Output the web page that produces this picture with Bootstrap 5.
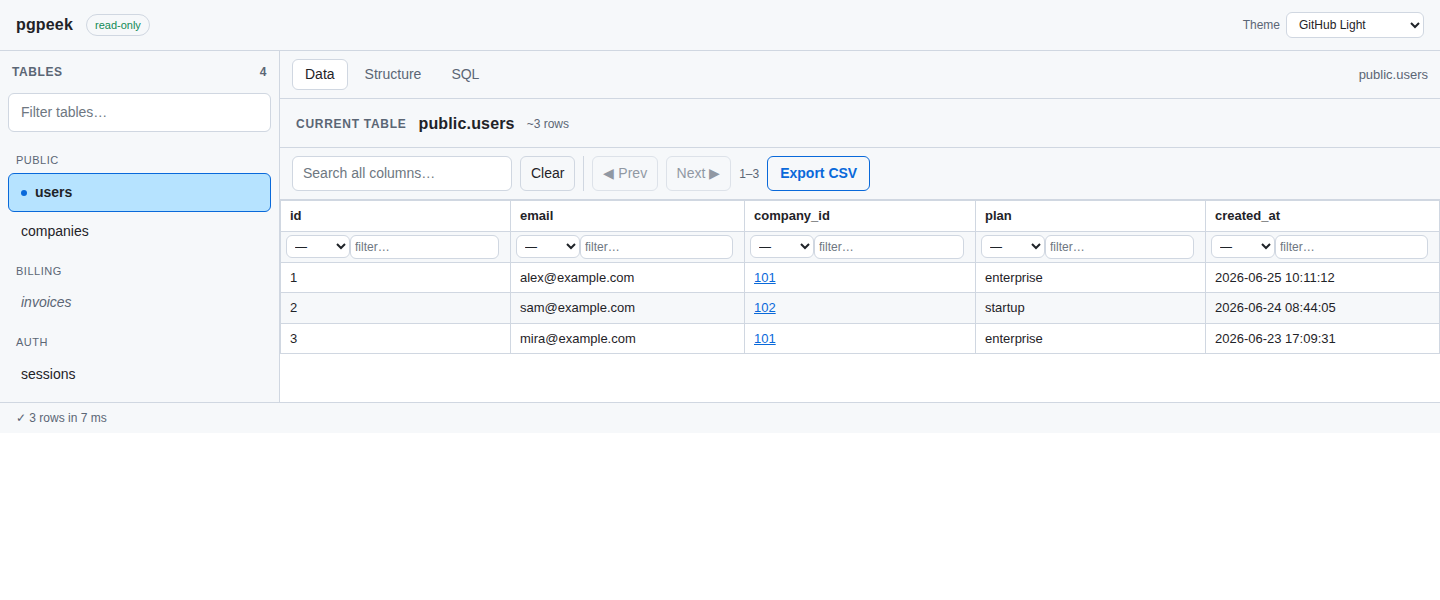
<!doctype html>
<html lang="en"><head><meta charset="utf-8"><title>pgpeek</title>
<link href="https://cdn.jsdelivr.net/npm/bootstrap@5.3.0/dist/css/bootstrap.min.css" rel="stylesheet">
<style>
:root{--line:#d0d7e1;--soft:#f6f8fa;--ink:#1f2328;--mute:#5b6675;--blue:#0969da;}
body{font-family:"Liberation Sans",Arial,sans-serif;color:var(--ink);background:#fff;font-size:14px;}
.app-head{height:51px;background:var(--soft);border-bottom:1px solid var(--line);padding:0 16px;}
.brand{font-size:16px;font-weight:700;letter-spacing:.01em;}
.ro-pill{font-size:11px;color:#128a55;border:1px solid var(--line);border-radius:999px;padding:3px 8px;line-height:14px;margin-left:13px;}
.theme-lbl{font-size:12px;color:var(--mute);margin-right:6px;}
.theme-sel{width:138px;height:26px;font-size:12px;padding:0 4px 0 8px;border-color:var(--line);border-radius:6px;color:var(--ink);appearance:auto;-webkit-appearance:auto;background-image:none;background-color:#fff;}
.shell{height:351px;}
.side{width:280px;flex:none;background:var(--soft);border-right:1px solid var(--line);padding:0 8px;}
.side-top{height:42px;padding:0 4px;font-size:12px;font-weight:700;letter-spacing:.6px;color:var(--mute);}
.side-filter{height:39px;font-size:14px;border-color:var(--line);border-radius:6px;padding:0 12px 2px;margin-bottom:22px;}
.side-filter::placeholder,.tool-search::placeholder,.col-filter::placeholder{color:#6e7781;opacity:1;}
.grp{font-size:11px;letter-spacing:.5px;color:var(--mute);padding-left:8px;line-height:13px;margin:14px 0 5px;}
.tbl-item{height:39px;padding:0 12px;border:1px solid transparent;border-radius:6px;font-size:14px;color:var(--ink);}
.tbl-item.on{background:#b6e3ff;border-color:var(--blue);font-weight:700;margin-top:6px;}
.tbl-item.view{font-style:italic;color:var(--mute);}
.tbl-item.tail{margin-top:6px;}
.dot{width:6px;height:6px;border-radius:50%;background:var(--blue);margin-right:8px;}
.main-pane{min-width:0;}
.tabbar{height:48px;background:var(--soft);border-bottom:1px solid var(--line);padding:0 12px;gap:4px;}
.tabbtn{height:31px;padding:0 12px;border:1px solid transparent;border-radius:6px;font-size:14px;color:var(--mute);background:transparent;}
.tabbtn.on{background:#fff;border-color:var(--line);color:var(--ink);}
.tab-path{font-size:13px;color:var(--mute);}
.curbar{height:49px;background:var(--soft);border-bottom:1px solid var(--line);padding:1px 16px 0;}
.cur-lbl{font-size:12px;font-weight:700;letter-spacing:.06em;color:var(--mute);}
.cur-name{font-size:16px;font-weight:700;margin-left:12px;letter-spacing:.01em;}
.cur-rows{font-size:12px;color:var(--mute);margin-left:12px;}
.toolbar{height:52px;background:var(--soft);border-bottom:1px solid var(--line);padding:0 12px;}
.tool-search{width:220px;height:35px;font-size:14px;border-color:var(--line);border-radius:6px;padding:0 10px 2px;}
.tbtn{height:35px;padding:0 10px;font-size:14px;border:1px solid var(--line);border-radius:6px;background:var(--soft);color:var(--ink);margin-left:8px;}
.tbtn:disabled{color:var(--mute);opacity:.65;border-color:var(--line);background:var(--soft);padding:0 9.4px 0 10px;}
.tsep{width:1px;height:35px;background:var(--line);margin:0 8px;}
.trange{font-size:12px;color:var(--mute);margin-left:8.5px;}
.tbtn.export{color:var(--blue);border-color:var(--blue);font-weight:700;padding:0 12px 0 12.5px;margin-left:7.5px;}
.data-t{table-layout:fixed;width:1159px;margin:0;font-size:13px;border-color:var(--line);color:var(--ink);}
.data-t th,.data-t td{padding:0 9px;border:1px solid var(--line);vertical-align:middle;color:var(--ink);background:transparent;box-shadow:none;}
.data-t .hrow th{height:31px;font-weight:700;background:#fff;}
.data-t .frow td{height:31px;padding:0 11px 0 5px;background:var(--soft);}
.data-t .r td{height:30px;}
.data-t .alt td{background:var(--soft);height:31px;}
.w1{width:230px}.w2{width:234px}.w3{width:231px}.w4{width:230px}.w5{width:234px}
.op-sel{width:64px;height:23px;flex:none;font-size:12px;padding:0 2px 0 4px;border-color:var(--line);border-radius:6px;appearance:auto;-webkit-appearance:auto;background-image:none;background-color:#fff;color:var(--ink);}
.col-filter{height:24px;min-height:0;font-size:12px;padding:0 4px;border-color:var(--line);border-radius:6px;}
.data-t a{color:var(--blue);}
.status{height:31px;background:var(--soft);border-top:1px solid var(--line);padding:0 16px;font-size:12px;color:var(--mute);}
</style></head><body>
<header class="app-head d-flex align-items-center">
  <span class="brand">pgpeek</span><span class="ro-pill">read-only</span>
  <div class="ms-auto d-flex align-items-center"><span class="theme-lbl">Theme</span>
  <select class="form-select theme-sel"><option>GitHub Light</option></select></div>
</header>
<div class="shell d-flex">
  <aside class="side">
    <div class="side-top d-flex justify-content-between align-items-center"><span>TABLES</span><span>4</span></div>
    <input class="form-control side-filter" placeholder="Filter tables…">
    <div class="grp">PUBLIC</div>
    <div class="tbl-item on d-flex align-items-center"><span class="dot"></span>users</div>
    <div class="tbl-item d-flex align-items-center">companies</div>
    <div class="grp">BILLING</div>
    <div class="tbl-item view d-flex align-items-center">invoices</div>
    <div class="grp">AUTH</div>
    <div class="tbl-item tail d-flex align-items-center">sessions</div>
  </aside>
  <main class="main-pane flex-grow-1">
    <div class="tabbar d-flex align-items-center">
      <button class="tabbtn on">Data</button><button class="tabbtn">Structure</button><button class="tabbtn">SQL</button>
      <span class="tab-path ms-auto">public.users</span>
    </div>
    <div class="curbar d-flex align-items-center"><span class="cur-lbl">CURRENT TABLE</span><span class="cur-name">public.users</span><span class="cur-rows">~3 rows</span></div>
    <div class="toolbar d-flex align-items-center">
      <input class="form-control tool-search" placeholder="Search all columns…">
      <button class="tbtn">Clear</button><span class="tsep"></span>
      <button class="tbtn m-0" disabled>◀ Prev</button><button class="tbtn" disabled>Next ▶</button>
      <span class="trange">1–3</span><button class="tbtn export">Export CSV</button>
    </div>
    <table class="table data-t">
      <colgroup><col class="w1"><col class="w2"><col class="w3"><col class="w4"><col class="w5"></colgroup>
      <thead><tr class="hrow"><th>id</th><th>email</th><th>company_id</th><th>plan</th><th>created_at</th></tr>
      <tr class="frow">
        <td><div class="d-flex"><select class="form-select op-sel"><option>—</option></select><input class="form-control col-filter" placeholder="filter…"></div></td>
        <td><div class="d-flex"><select class="form-select op-sel"><option>—</option></select><input class="form-control col-filter" placeholder="filter…"></div></td>
        <td><div class="d-flex"><select class="form-select op-sel"><option>—</option></select><input class="form-control col-filter" placeholder="filter…"></div></td>
        <td><div class="d-flex"><select class="form-select op-sel"><option>—</option></select><input class="form-control col-filter" placeholder="filter…"></div></td>
        <td><div class="d-flex"><select class="form-select op-sel"><option>—</option></select><input class="form-control col-filter" placeholder="filter…"></div></td>
      </tr></thead>
      <tbody>
      <tr class="r"><td>1</td><td>alex@example.com</td><td><a href="#">101</a></td><td>enterprise</td><td>2026-06-25 10:11:12</td></tr>
      <tr class="r alt"><td>2</td><td>sam@example.com</td><td><a href="#">102</a></td><td>startup</td><td>2026-06-24 08:44:05</td></tr>
      <tr class="r"><td>3</td><td>mira@example.com</td><td><a href="#">101</a></td><td>enterprise</td><td>2026-06-23 17:09:31</td></tr>
      </tbody>
    </table>
  </main>
</div>
<footer class="status d-flex align-items-center">✓ 3 rows in 7 ms</footer>
</body></html>
